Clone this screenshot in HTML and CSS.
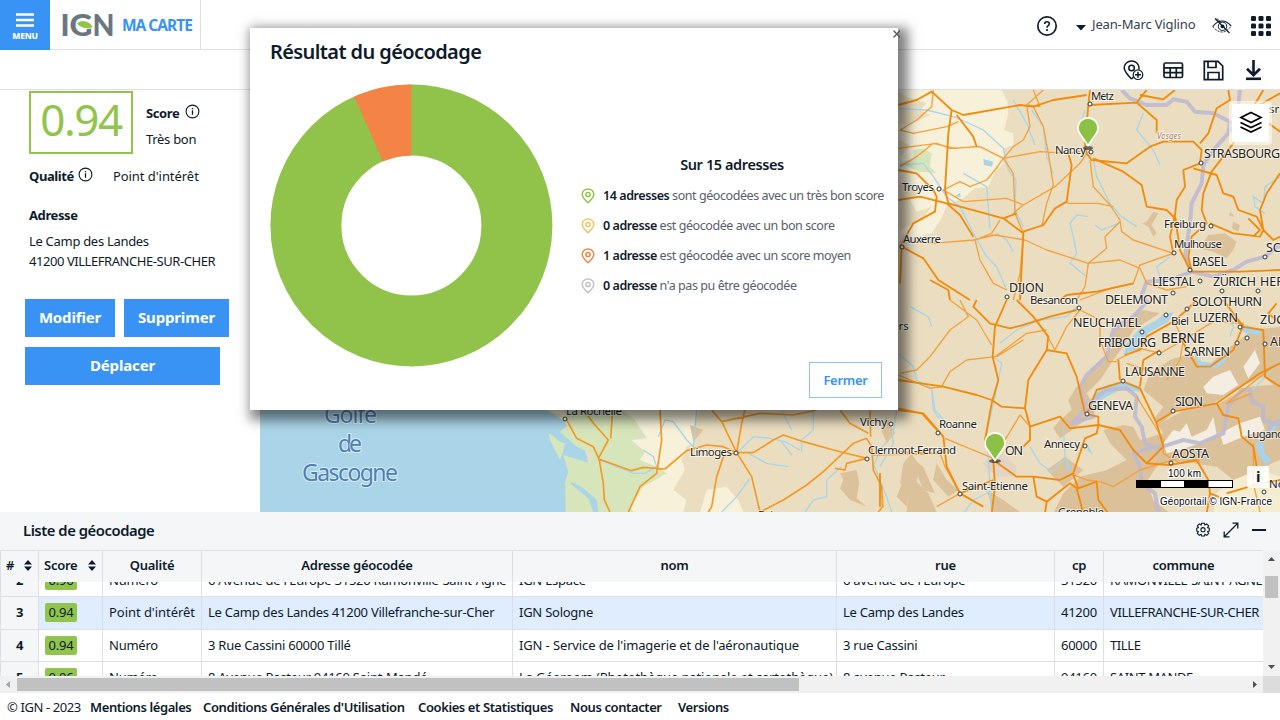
FILE: index.html
```html
<!DOCTYPE html>
<html lang="fr">
<head>
<meta charset="utf-8">
<title>Ma carte - Géocodage</title>
<link rel="stylesheet" href="styles.css">
</head>
<body>
<div class="app">
  <header class="topbar">
    <div class="menu">
      <svg width="18" height="15" viewBox="0 0 18 15"><path d="M0 2.500h18M0 8h18M0 13.500h18" stroke="#fff" stroke-width="2.700"/></svg>
      <span>MENU</span>
    </div>
    <div class="brand">
      <svg class="logo" width="58" height="42" viewBox="59 4 58 42">
        <g class="logo-text"><text x="60.500" y="35.500">I</text><text x="69.500" y="35.500" textLength="23" lengthAdjust="spacingAndGlyphs">G</text><text x="92.500" y="35.500" textLength="22" lengthAdjust="spacingAndGlyphs">N</text></g>
        <path d="M77 23.500Q79.500 20.300 84.500 21.200Q90.500 22.200 92.800 27Q88 29 83.500 27.800Q79 26.800 77 23.500Z" fill="#91c44c" stroke="#fff" stroke-width="1.600" paint-order="stroke"/>
      </svg>
      <span class="brand-name">MA CARTE</span>
    </div>
    <div class="user">
      <svg class="i-help" width="22" height="22" viewBox="0 0 22 22"><circle cx="11" cy="11" r="9.200" fill="none" stroke="#0d1b2a" stroke-width="1.700"/><path d="M8.700 9Q8.700 6.800 11 6.800T13.300 8.800Q13.300 10 11.900 10.900Q11 11.500 11 12.700" fill="none" stroke="#0d1b2a" stroke-width="1.600"/><circle cx="11" cy="15" r="1.100" fill="#0d1b2a"/></svg>
      <svg class="i-caret" width="10" height="6" viewBox="0 0 10 6"><path d="M0 0H10L5 5.500Z" fill="#0d1b2a"/></svg>
      <span class="user-name">Jean-Marc Viglino</span>
      <svg class="i-eye" width="20" height="18" viewBox="0 0 20 18"><g fill="none" stroke="#0d1b2a"><path d="M.8 9.500Q5 4 10 4T19.200 9" stroke-width="1.200"/><path d="M.8 9.500Q5 15 10 15T19.200 9" stroke-width="1" stroke-dasharray="2 1.200"/><circle cx="10.500" cy="9.300" r="4.200" stroke-width="1"/><path d="M3 1.500L17.500 16" stroke-width="1.300"/><path d="M5 1.500L9 5.500" stroke-width="1"/></g><circle cx="10.500" cy="9.300" r="1.900" fill="#0d1b2a"/></svg>
      <svg class="i-grid" width="20" height="20" viewBox="0 0 20 20" fill="#0d1b2a"><rect width="5" height="5" rx="1.300"/><rect x="7.500" width="5" height="5" rx="1.300"/><rect x="15" width="5" height="5" rx="1.300"/><rect y="7.500" width="5" height="5" rx="1.300"/><rect x="7.500" y="7.500" width="5" height="5" rx="1.300"/><rect x="15" y="7.500" width="5" height="5" rx="1.300"/><rect y="15" width="5" height="5" rx="1.300"/><rect x="7.500" y="15" width="5" height="5" rx="1.300"/><rect x="15" y="15" width="5" height="5" rx="1.300"/></svg>
    </div>
  </header>

  <div class="toolbar">
    <svg width="21" height="21" viewBox="0 0 21 21"><g fill="none" stroke="#0d1b2a" stroke-width="1.500"><path d="M8.500 19Q1.200 11.500 1.200 8A7.400 7.100 0 0 1 16 8Q16 8.800 15.700 9.600M8.500 19L10.500 17"/><circle cx="8.600" cy="8" r="2.800"/><circle cx="15" cy="14.700" r="4.800" stroke-width="1.200"/><path d="M12 14.700h6M15 11.700v6"/></g></svg>
    <svg width="21" height="21" viewBox="0 0 21 21"><g fill="none" stroke="#0d1b2a" stroke-width="1.700"><rect x="1" y="3" width="18.500" height="14.500" rx="1.500"/><path d="M1 7.800h18.500M1 12.700h18.500M7.200 8v10M13.300 8v10"/></g></svg>
    <svg width="21" height="21" viewBox="0 0 21 21"><g fill="none" stroke="#0d1b2a" stroke-width="1.700"><path d="M1.300 1.300H15L19.700 6V19.700H1.300Z"/><path d="M5 1.500V7.500H13V1.500M5 19.500V12.500H16V19.500"/></g></svg>
    <svg width="21" height="21" viewBox="0 0 21 21"><g fill="none" stroke="#0d1b2a" stroke-width="2.600"><path d="M10.500 0V15M4 8.800L10.500 15.200L17 8.800"/><path d="M3 18.800H18"/></g></svg>
  </div>

  <main class="content">
    <aside class="side">
      <div class="score-row">
        <div class="score-box">0.94</div>
        <div class="score-info">
          <p class="strong">Score <svg class="info" width="15" height="15" viewBox="0 0 15 15"><circle cx="7.500" cy="7.500" r="6.400" fill="none" stroke="#0d1b2a" stroke-width="1.100"/><path d="M7.500 6.300v4.400M7.500 4v1.300" stroke="#0d1b2a" stroke-width="1.300"/></svg></p>
          <p class="verdict">Très bon</p>
        </div>
      </div>
      <div class="quality"><span class="strong">Qualité <svg class="info info-quality" width="15" height="15" viewBox="0 0 15 15"><circle cx="7.500" cy="7.500" r="6.400" fill="none" stroke="#0d1b2a" stroke-width="1.100"/><path d="M7.500 6.300v4.400M7.500 4v1.300" stroke="#0d1b2a" stroke-width="1.300"/></svg></span><span class="quality-value">Point d'intérêt</span></div>
      <p class="address-title strong">Adresse</p>
      <p class="address"><span>Le Camp des Landes</span><br>41200 VILLEFRANCHE-SUR-CHER</p>
      <div class="actions"><button class="b-edit">Modifier</button><button class="b-del">Supprimer</button><button class="b-move">Déplacer</button></div>
    </aside>

    <section class="map">
      <svg class="map-canvas" width="1020" height="422" viewBox="260 90 1020 422">
        <rect x="260" y="90" width="1020" height="422" fill="#ebdec0"/>
        <!-- Atlantic side -->
        <path d="M260 90H560V400L568 430L585 450L590 470L600 490L604 512H260Z" fill="#aad4e8"/>
        <g transform="translate(540 390) scale(.33333)">
          <path d="M25 60L80 100L100 140L165 170L178 210L190 300L205 366H430L440 330L400 300L440 230L470 190L455 120L480 60Z" fill="#f7f1d9"/>
          <path d="M70 60L90 100L60 125L110 170L155 190L150 220L70 195L85 245L75 280L77 366H280L270 350L310 290L380 250L350 230L300 210L315 185L275 150L320 145L285 90L250 60Z" fill="#d7e5bb"/>
          <path d="M95 275L130 295L170 330L175 366H160L145 325L90 280Z" fill="#aad4e8"/>
          <path d="M25 127L60 155L75 160L68 190L60 210L45 180L30 150ZM15 60L70 78L60 85Z" fill="#d7e5bb"/>
          <path d="M465 60L500 80L480 150L440 170L425 210L455 300L480 366H1200V60Z" fill="#ebdec0"/>
          <path d="M285 366L330 300L390 290L370 320L430 366ZM480 366L500 300L560 290L595 330L610 366Z" fill="#f7f1d9"/>
          <path d="M900 250L950 240L958 280L950 325L980 350L930 330L900 295L910 270ZM1110 200L1150 230L1185 310L1150 300L1125 240ZM1090 270L1110 280L1100 350L1070 320Z" fill="#dcc29b"/>
          <path d="M450 105L490 120L460 155Z" fill="#dcc29b"/>
          <g fill="none" stroke="#a9d5e8" stroke-width="4"><path d="M355 140L375 90L400 95L440 150L460 170L470 60"/><path d="M590 190L640 140L690 145L735 155L780 180M725 155L755 195M625 190L680 220L745 230"/><path d="M860 270L905 230M860 270V320L820 330L795 366M630 265L590 320L545 366M820 60V120L785 150V185M725 60L755 120M1000 220L1040 320L1055 366M1070 60L1060 130L1020 180L1000 230M1175 0L1180 60L1200 90"/><path d="M180 210L230 230L280 250L315 250L350 230L340 200L310 180"/></g>
          <g fill="none" stroke="#f39a25" stroke-width="5" stroke-linejoin="round"><path d="M80 90L110 145L160 170L178 210L190 280L193 330L210 366M178 208L275 242L310 232L375 237L440 182L500 165L550 170L590 188L640 188L700 150L730 135L790 155L880 180L940 195L980 205M265 366L300 290L350 250L365 150L360 60M130 60L165 105L205 150L175 205M218 60L212 145M590 188L545 95L515 60M590 188L605 100L615 60M545 95L660 70L760 75L830 60M590 188L550 200L530 260L515 350L505 366"/><path d="M590 188L635 260L660 366L730 330L800 285L850 245L940 160L980 145L995 170L1000 240L1025 290L1028 350L1015 366M885 235L915 240L920 220L980 205M900 60L930 100L985 130M990 60L992 140M1000 195L1200 190M1075 55L1145 70L1195 125"/></g>
        </g>
        <!-- Northern part -->
        <g transform="translate(880 90) scale(.33333)">
          <path d="M0 0H365L382 35L385 70L372 120L400 130V165L372 175L370 220L345 245L325 290L285 295L250 325L200 345L185 385L155 430L100 445L70 430L50 470H0Z" fill="#f7f1d9"/>
          <path d="M50 0L80 20L140 40L120 60L150 75L90 105L60 100M55 150L90 165L80 180L60 200M55 270L80 285L120 310L90 330L110 365L155 350L125 390L60 420ZM60 520L100 545L130 580L115 590L80 570L55 630" fill="#ebdec0"/>
          <path d="M130 175L155 190L150 230L170 250L120 245L60 220L100 205V180Z" fill="#d7e5bb"/>
          <path d="M310 207L340 215L335 230L312 225ZM223 320L240 308L242 320Z" fill="#a9d3e6"/>
          <path d="M820 365L800 395L785 400L805 410L820 440L830 430L815 405L835 370ZM985 435L1035 430L1070 455L1060 480L1040 505L1000 485L960 475ZM1060 395L1080 405L1075 425L1055 415ZM1050 365L1065 380L1048 378Z" fill="#dcc29b"/>
          <g fill="none" stroke="#a9d5e8" stroke-width="4"><path d="M55 55L140 60L220 80L245 90L310 120L370 175L385 240L408 270L405 360L430 410"/><path d="M400 30L440 100L465 165M455 60L490 110L500 200L520 250M60 225L130 220L160 260L200 320L240 350L280 430L320 500L350 530L380 600M250 250L320 290L330 415M350 430L380 450L400 485M625 380L590 375L570 400L580 440L590 490L570 520L620 560"/><path d="M640 210L650 260L690 340L725 380L770 410M790 70L770 120L820 180L840 225M615 60L600 110L620 150M1150 340L1120 320L1125 350L1155 370M1200 260L1155 290L1150 340M870 500L830 530L850 590M645 405L665 420L715 400"/></g>
          <g fill="none" stroke="#beb9d1" stroke-width="12" stroke-linejoin="round" opacity=".9"><path d="M725 0L750 25L800 45L860 45L880 28L920 35L945 65L1000 70L1050 95L1045 130L1000 180L970 225L965 280L935 340L930 400L915 500L935 545L1000 560L1060 540L1100 515L1155 500L1190 470L1200 470M935 545L870 570L800 575L780 630M1055 125L1070 90L1080 0"/></g>
          <g fill="none" stroke="#f4a03d" stroke-width="4" stroke-linejoin="round"><path d="M160 0L155 50L110 90L60 120L100 130L200 110L235 95M285 170L225 175L160 160L110 200L60 230M55 175L170 160L210 175L300 170L370 205L480 185L570 190L620 180M490 0L440 45L480 50L460 0M460 50L490 110L505 190L520 285L500 340L485 410M440 45L450 110L430 150L400 170L370 205L345 240L320 270L270 290L240 275L190 300"/><path d="M370 205L400 250L405 370L430 430M190 300L250 335L380 325L430 345L525 290L600 220L620 190M400 370L430 345M435 450L345 435L280 450L160 460L100 455M360 390L335 430L285 450L300 510L340 580L380 600M560 340L655 340L700 350M430 440L420 550L400 630M630 210L640 290L690 345L720 390L725 425L760 450L880 490L780 525L760 580L690 595L600 630M720 395L675 440L680 475L625 520L615 590L590 630M435 450L500 480L625 520L720 510L780 535L800 580L860 600L920 590"/></g>
          <g fill="none" stroke="#f18b0c" stroke-width="5.500" stroke-linejoin="round"><path d="M55 45L110 30L155 5L215 60L250 75L420 45L460 50L520 30L620 15M215 60L205 130L195 300L205 340L370 385L430 430L420 630M55 330L120 320L200 340L240 375L280 440M370 385L410 370M430 425L490 405L525 355L560 335L575 225L565 190M230 75L280 140L290 170M630 0L625 45L615 160L620 190L635 210L740 220L810 170L850 155L940 155L965 180L960 220L910 240L915 290L890 330L885 375L870 440L880 490"/><path d="M630 45L770 38L830 90L830 130M770 38L800 0M780 15L850 28L885 0M640 205L730 245L785 285L800 350L860 360L890 390M1045 0L1050 30L1010 55L985 130L960 160M1150 0L1120 50L1060 160L995 245L970 310L965 360L980 400L935 440L925 500L935 545L1080 545L1200 540M940 235L1010 255L1030 310L1060 320L1075 360L1130 380L1150 420L1140 440L1060 430L990 400M1200 250L1160 310L1140 360L1150 420L1180 450L1200 440M1120 440L1140 420L1105 385M885 380L900 480L930 540M65 470L130 505L175 570L270 630M60 470L100 400L165 365L170 320L160 300M55 240L110 250L160 300M65 470L60 580M540 630L560 615L650 605L760 580M150 570L205 600L210 630M1110 60L1180 110L1200 125M1060 90L1200 10"/></g>
        </g>
        <!-- Alps and Rhône valley -->
        <g transform="translate(880 300) scale(.33333)">
          <path d="M790 30L730 60L690 100L700 140L640 200L610 245L590 260L565 300L575 330L540 360L520 385L540 415L590 380L650 330L620 280L660 240L700 180L730 140L760 90L840 40ZM870 180L930 160L980 200L1050 140L1120 90L1200 80V480L1060 540L1010 500L870 480L830 500L800 545L820 600L870 640H520L550 580L600 530L680 510L740 480L690 430L670 390L750 370L780 300L730 320L760 300L820 360L850 320L790 270L810 220Z" fill="#dbc199"/>
          <path d="M720 280L790 310L850 400L780 420L760 380L700 370L690 350L600 380L640 340ZM850 365L930 320L1020 310L1100 260L1180 255L1150 230L1080 260L1000 310L890 330Z" fill="#ebdec0"/>
          <path d="M95 460L70 490L60 550L85 580L80 636H170L145 580L110 545L120 500ZM170 490L200 540L235 570L205 590L160 540ZM320 570L370 600L420 636H340ZM500 510L555 470L610 510L550 560ZM0 380L20 350L45 400L20 430Z" fill="#dcc29b"/>
          <path d="M610 530L670 520L700 580L650 636H540L570 600Z" fill="#dbc199"/>
          <path d="M970 260L1000 230L1050 210L1075 255L1030 285L980 280ZM1090 200L1125 150L1140 190L1105 235ZM850 430L880 390L900 395L920 370L935 410L980 390L1000 350L1010 405L960 430L900 450L860 460ZM1020 400L1080 370L1140 350L1155 390L1090 410L1030 435Z" fill="#f4eee2"/>
          <path d="M1060 540L1140 510L1200 530V640H1000L1010 580Z" fill="#f4edcf"/>
          <path d="M305 490L370 460L410 500L405 530L350 530Z" fill="#e3d4c2"/>
          <g fill="#a9d3e6"><path d="M620 345L640 285L680 255L735 245L780 260L790 275L720 270L680 290L640 315ZM730 165L740 130L775 90L820 65L825 80L790 115L775 145ZM800 80L850 45L880 35L865 65L810 95ZM940 155L965 185L1010 190L1030 165L1040 180L1010 205L960 205ZM1080 85L1100 75L1145 90L1140 105L1095 100ZM555 465L565 480L570 510L560 515ZM1125 430L1150 425L1155 460L1175 480L1155 495L1135 460ZM620 430L640 465L625 455ZM1170 390L1200 350V365L1175 405Z"/></g>
          <g fill="none" stroke="#a9d5e8" stroke-width="4"><path d="M340 170L365 190L345 290L320 400L335 640M360 130L410 90L480 60L560 50L590 20M450 440L480 490L515 515L550 480M90 20L145 50L155 80M55 160L100 200L110 240L155 265L165 330L200 370M1040 40L1060 80L1050 110M550 380L555 470M35 385L40 430L0 500M250 640L280 600L340 570M1110 280L1180 200M960 460L990 480"/></g>
          <g fill="none" stroke="#beb9d1" stroke-width="12" stroke-linejoin="round" opacity=".9"><path d="M805 0L760 50L700 90L680 170L620 225L600 260L615 330L575 370L640 350L625 310L680 270L740 265L770 290L765 350L785 380L795 430L830 445L910 420L960 430L1030 400L1045 320L1085 270L1110 270L1115 305L1150 320V360L1200 375M820 440L760 460L780 500L785 550L825 580L835 636M1200 360L1170 380L1160 410"/></g>
          <g fill="none" stroke="#f4a03d" stroke-width="4" stroke-linejoin="round"><path d="M210 0L290 60L335 135M240 0L265 50L210 90L150 170L110 210L60 220M185 260L210 215L260 180L345 170L440 100L500 90M350 170L430 120M525 150L560 80L600 30L660 60V120L685 185H710M500 105L525 150M450 380L420 345L375 420M50 455L180 460L195 500L240 580L170 620M440 345L450 380M580 525L620 540L660 545L700 560L780 510L880 480M860 240L900 180L910 120L880 60M710 180L780 145L840 160L910 120L1000 65L1090 70M740 190L830 220M770 290L820 370L850 420V460L900 490L960 480M1115 280L1040 310L1180 200M1120 430V550L1140 636M195 415L340 475L380 410M55 225L150 265L190 260"/></g>
          <g fill="none" stroke="#f18b0c" stroke-width="5.500" stroke-linejoin="round"><path d="M380 0L345 80L338 170L355 240L335 310L315 420L340 480L345 560L335 640M290 0L280 20L330 70L390 85L430 75L510 50L590 30M410 0L460 50L505 110L500 150L445 240L435 325L365 320L335 300L290 285L190 260L55 240M435 325L450 380L450 420L430 440M450 380L540 350L570 385L655 375L655 350L620 343L650 270L730 245L780 265L830 370L850 440L800 490L760 450L720 390L655 375L650 400L615 415L580 520L540 540L460 530H410L340 480M500 150L560 160L590 230L615 340M460 530L470 590L500 605L495 640M500 605L570 550L590 565L610 640M580 525L595 565L650 545L655 600L685 640"/><path d="M735 165L780 150L800 110L880 65L920 30L950 0M715 180L720 240M780 260L790 180L840 150M905 120L950 200L990 200L1060 150L1090 75L1050 50M1085 80L1150 90L1155 230L1200 260M1030 0L1090 80M830 365L880 335L1010 310L1140 220L1200 190M1010 310L1030 345L1075 355L1085 410L1120 440L1130 500L1150 540M800 490L870 495L950 480L985 540L990 580L1040 600M990 580L980 640M1040 580L1140 550L1200 540M55 330L130 340L190 410L200 500L240 580L340 540M240 580L310 620M0 520V620M1190 10L1165 40L1200 70"/></g>
        </g>
        <g class="towns" fill="#fff" stroke="#333" stroke-width="1"><circle cx="1090" cy="104" r="2"/><circle cx="1091" cy="152" r="2"/><circle cx="939" cy="189" r="2"/><circle cx="902" cy="247" r="2"/><circle cx="1201" cy="163" r="2"/><circle cx="1211" cy="226" r="2"/><circle cx="1174" cy="253" r="2"/><circle cx="1190" cy="270" r="2"/><circle cx="1200" cy="281" r="2"/><circle cx="1222" cy="291" r="2"/><circle cx="1173" cy="293" r="2"/><circle cx="1007" cy="297" r="2"/><circle cx="1079" cy="308" r="2"/><circle cx="1166" cy="315" r="2"/><circle cx="1142" cy="332" r="2"/><circle cx="1187" cy="309" r="2"/><circle cx="1159" cy="353" r="2"/><circle cx="1123" cy="381" r="2"/><circle cx="1087" cy="414" r="2"/><circle cx="1173" cy="411" r="2"/><circle cx="1085" cy="446" r="2"/><circle cx="1171" cy="463" r="2"/><circle cx="960" cy="494" r="2"/><circle cx="938" cy="433" r="2"/><circle cx="891" cy="424" r="2"/><circle cx="867" cy="459" r="2"/><circle cx="736" cy="453" r="2"/><circle cx="565" cy="419" r="2"/><circle cx="1265" cy="257" r="2"/><circle cx="1258" cy="291" r="2"/><circle cx="1240" cy="327" r="2"/><circle cx="1247" cy="338" r="2"/><circle cx="1237" cy="343" r="2"/><circle cx="1265" cy="344" r="2"/><circle cx="1264" cy="492" r="2"/></g>
        <g class="places">
          <text x="1091" y="100" textLength="23">Metz</text><text x="1055" y="154" textLength="31">Nancy</text><text x="902" y="191" textLength="32">Troyes</text><text x="903" y="243" textLength="38">Auxerre</text><text x="1164" y="228" textLength="42">Freiburg</text><text x="1174" y="248" textLength="48">Mulhouse</text><text x="1030" y="304" textLength="48">Besancon</text><text x="1171" y="325" textLength="18">Biel</text><text x="939" y="428" textLength="38">Roanne</text><text x="868" y="454" textLength="88">Clermont-Ferrand</text><text x="1044" y="448" textLength="36">Annecy</text><text x="962" y="490" textLength="66">Saint-Etienne</text><text x="1247" y="438" textLength="37">Lugano</text><text x="1058" y="516" textLength="46">Grenoble</text><text x="860" y="426" textLength="27">Vichy</text><text x="690" y="456" textLength="42">Limoges</text><text x="566" y="415" textLength="56">La Rochelle</text><text x="892" y="330">ers</text><text x="758" y="519">Brive</text><text x="1269" y="488">Nov</text><text x="1269" y="113">sruhe</text>
        </g>
        <g class="cities">
          <text x="1204" y="158" textLength="76">STRASBOURG</text><text x="1192" y="266" textLength="35">BASEL</text><text x="1152" y="286" textLength="43">LIESTAL</text><text x="1213" y="286" textLength="43">ZÜRICH</text><text x="1260" y="286">HERISAU</text><text x="1266" y="252">SCH</text><text x="1009" y="292" textLength="35">DIJON</text><text x="1105" y="304" textLength="63">DELEMONT</text><text x="1192" y="306" textLength="70">SOLOTHURN</text><text x="1073" y="327" textLength="68">NEUCHATEL</text><text x="1193" y="322" textLength="45">LUZERN</text><text x="1260" y="324">ZUG</text><text x="1098" y="347" textLength="58">FRIBOURG</text><text class="capital" x="1161" y="343" textLength="44">BERNE</text><text x="1184" y="356" textLength="46">SARNEN</text><text x="1270" y="346">AL</text><text x="1125" y="376" textLength="60">LAUSANNE</text><text x="1088" y="410" textLength="45">GENEVA</text><text x="1175" y="406" textLength="28">SION</text><text x="1172" y="458" textLength="37">AOSTA</text><text x="1005" y="455" textLength="18">ON</text>
        </g>
        <text class="relief" x="1157" y="139" textLength="24">Vosges</text>
        <g class="sea"><text x="324" y="423" textLength="53">Golfe</text><text x="338" y="452" textLength="24">de</text><text x="302" y="481" textLength="96">Gascogne</text></g>
        <ellipse cx="1088" cy="148" rx="5" ry="2" fill="#333" opacity=".7"/><ellipse cx="995" cy="461" rx="6" ry="2" fill="#333" opacity=".7"/>
        <g fill="#8dc145" stroke="#fff" stroke-width="1.600"><path d="M1088 145.500L1080.500 134.500A10 10 0 1 1 1095.500 134.500Z"/><path d="M995 460.500L987.500 449.500A10 10 0 1 1 1002.500 449.500Z"/></g>
        <rect x="1136" y="480" width="97" height="8" fill="#000"/><path d="M1161 481h23v6h-23zM1208.500 481h23.500v6h-23.500z" fill="#fff"/>
        <text class="scale" x="1168" y="477" textLength="33">100 km</text>
        <text class="scale" x="1160" y="505" textLength="112">Géoportail © IGN-France</text>
      </svg>
      <div class="layers"><svg width="24" height="23" viewBox="0 0 24 23"><path d="M12 1.500L22 6.500L12 11.500L2 6.500ZM1.500 11.500L12 16.500L22.500 11.500M1.500 16L12 21L22.500 16" fill="none" stroke="#000" stroke-width="1.700"/></svg></div>
      <div class="map-info">i</div>
    </section>
  </main>

  <section class="list">
    <div class="list-head"><h2>Liste de géocodage</h2>
      <div class="list-tools">
        <svg width="16" height="16" viewBox="0 0 16 16"><g fill="none" stroke="#0d1b2a" stroke-width="1" transform="translate(-.800 0) scale(1.100)"><path d="M6.700 1.200h2.600l.4 1.500 1.700-.9 1.700 1.700-.9 1.700 1.500.4v2.700l-1.500.4.9 1.700-1.700 1.700-1.700-.9-.4 1.500H6.700l-.4-1.500-1.700.9-1.700-1.700.9-1.700-1.500-.4V5.600l1.500-.4-.9-1.700 1.700-1.700 1.700.9Z"/><circle cx="8" cy="7" r="1.900"/></g></svg>
        <svg width="16" height="16" viewBox="0 0 16 16"><path d="M1.500 14.500L14.500 1.500M9.500 1.200H14.800V6.500M1.200 9.500V14.800H6.500" fill="none" stroke="#0d1b2a" stroke-width="1.300"/></svg>
        <svg width="16" height="16" viewBox="0 0 16 16"><path d="M1 8H15" stroke="#0d1b2a" stroke-width="2"/></svg>
      </div>
    </div>
    <div class="table-zone">
      <div class="table">
        <div class="row head"><div class="sort"># <svg width="8" height="11" viewBox="0 0 8 11"><path d="M0 4.500L4 0L8 4.500ZM0 6.500H8L4 11Z" fill="#0d1b2a"/></svg></div><div class="sort">Score <svg width="8" height="11" viewBox="0 0 8 11"><path d="M0 4.500L4 0L8 4.500ZM0 6.500H8L4 11Z" fill="#0d1b2a"/></svg></div><div>Qualité</div><div>Adresse géocodée</div><div>nom</div><div>rue</div><div>cp</div><div>commune</div></div>
        <div class="rows">
          <div class="row"><div class="num">2</div><div><b>0.96</b></div><div>Numéro</div><div>6 Avenue de l'Europe 31520 Ramonville-Saint-Agne</div><div>IGN Espace</div><div>6 avenue de l'Europe</div><div>31520</div><div class="caps">RAMONVILLE-SAINT-AGNE</div></div>
          <div class="row selected"><div class="num">3</div><div><b>0.94</b></div><div class="quality-cell">Point d'intérêt</div><div>Le Camp des Landes 41200 Villefranche-sur-Cher</div><div>IGN Sologne</div><div>Le Camp des Landes</div><div>41200</div><div class="caps">VILLEFRANCHE-SUR-CHER</div></div>
          <div class="row"><div class="num">4</div><div><b>0.94</b></div><div>Numéro</div><div>3 Rue Cassini 60000 Tillé</div><div class="name-cell">IGN - Service de l'imagerie et de l'aéronautique</div><div>3 rue Cassini</div><div>60000</div><div class="caps">TILLE</div></div>
          <div class="row"><div class="num">5</div><div><b>0.96</b></div><div>Numéro</div><div>8 Avenue Pasteur 94160 Saint-Mandé</div><div class="name-cell">La Géoroom (Photothèque nationale et cartothèque)</div><div>8 avenue Pasteur</div><div>94160</div><div class="caps">SAINT-MANDE</div></div>
        </div>
      </div>
      <div class="vbar"><svg width="17" height="126" viewBox="0 0 17 126"><path d="M5 11L8.500 7L12 11ZM5 115H12L8.500 119Z" fill="#505050"/><rect x="2" y="26" width="13" height="22" fill="#c1c1c1"/></svg></div>
    </div>
    <div class="hbar"><svg width="1263" height="17" viewBox="0 0 1263 17"><path d="M10 5L6 8.500L10 12Z" fill="#a3a3a3"/><path d="M1253 5L1257 8.500L1253 12Z" fill="#505050"/><rect x="17" y="2" width="782" height="13" fill="#c1c1c1"/></svg></div>
  </section>

  <footer class="foot"><span>© IGN - 2023</span><a>Mentions légales</a><a>Conditions Générales d'Utilisation</a><a>Cookies et Statistiques</a><a>Nous contacter</a><a>Versions</a></footer>
</div>

<div class="dialog">
  <svg class="close" width="7" height="8" viewBox="0 0 7 8"><path d="M.5 .5L7 7.500M7 .5L.5 7.500" stroke="#555" stroke-width="1.200"/></svg>
  <h1>Résultat du géocodage</h1>
  <div class="result">
    <svg class="donut" width="284" height="284" viewBox="-142.400 -142.400 284 284"><circle r="105.500" fill="none" stroke="#91c34b" stroke-width="71"/><path d="M0 -141V-70A70 70 0 0 0 -28.500 -63.900L-57.300 -128.800A141 141 0 0 1 0 -141Z" fill="#f38446"/></svg>
    <div class="legend">
      <h3>Sur 15 adresses</h3>
      <p class="very-good"><svg width="14" height="16" viewBox="0 0 14 16"><path d="M7 14.800Q1.200 9.500 1.200 6.500A5.800 5.600 0 0 1 12.800 6.500Q12.800 9.500 7 14.800Z"/><circle cx="7" cy="6.500" r="2.100"/></svg><span><b>14 adresses</b> sont géocodées avec un très bon score</span></p>
      <p class="good"><svg width="14" height="16" viewBox="0 0 14 16"><path d="M7 14.800Q1.200 9.500 1.200 6.500A5.800 5.600 0 0 1 12.800 6.500Q12.800 9.500 7 14.800Z"/><circle cx="7" cy="6.500" r="2.100"/></svg><span><b>0 adresse</b> est géocodée avec un bon score</span></p>
      <p class="medium"><svg width="14" height="16" viewBox="0 0 14 16"><path d="M7 14.800Q1.200 9.500 1.200 6.500A5.800 5.600 0 0 1 12.800 6.500Q12.800 9.500 7 14.800Z"/><circle cx="7" cy="6.500" r="2.100"/></svg><span><b>1 adresse</b> est géocodée avec un score moyen</span></p>
      <p class="none"><svg width="14" height="16" viewBox="0 0 14 16"><path d="M7 14.800Q1.200 9.500 1.200 6.500A5.800 5.600 0 0 1 12.800 6.500Q12.800 9.500 7 14.800Z"/><circle cx="7" cy="6.500" r="2.100"/></svg><span><b>0 adresse</b> n'a pas pu être géocodée</span></p>
      <button class="b-close">Fermer</button>
    </div>
  </div>
</div>
</body>
</html>
```

FILE: styles.css
```css
* { box-sizing: border-box; }
body { margin: 0; width: 1280px; height: 720px; overflow: hidden; background: #fff; color: #0d1b2a; font: 13px/20px "Noto Sans", "Open Sans", sans-serif; letter-spacing: -.25px; }
p, h1, h2, h3 { margin: 0; }
svg { display: block; flex: none; }
button { font-family: inherit; border: 0; padding: 0; white-space: nowrap; }
.app { display: flex; flex-direction: column; width: 1280px; height: 720px; }

.topbar { display: flex; height: 50px; border-bottom: 1px solid #dfe0e3; }
.menu { width: 50px; height: 50px; background: #3993f5; color: #fff; display: flex; flex-direction: column; align-items: center; padding-top: 12px; font-size: 8.5px; font-weight: 800; line-height: 18px; letter-spacing: -.2px; }
.brand { width: 151px; display: flex; align-items: center; padding-left: 9px; border-right: 1px solid #dfe0e3; }
.logo-text { font: 900 30px Lato, sans-serif; fill: #6b7780; letter-spacing: 0; }
.brand-name { color: #3993f5; font-size: 15.5px; font-weight: 700; margin-left: 5px; letter-spacing: -1px; white-space: nowrap; }
.user { margin-left: auto; display: flex; align-items: center; padding-right: 9px; padding-top: 3px; }
.i-caret { margin: 3px 6px 0 18px; }
.user-name { width: 104px; white-space: nowrap; color: #34404c; margin-top: -4px; letter-spacing: -.15px; }
.i-eye { margin: 0 19px 0 16px; }

.toolbar { height: 40px; border-bottom: 1px solid #dfe0e3; display: flex; justify-content: flex-end; align-items: center; gap: 19px; padding: 1px 16px 0 0; }

.content { display: flex; height: 422px; }
.side { width: 260px; padding: 1px 0 0 25px; }
.score-row { display: flex; padding-left: 4px; }
.score-box { width: 104px; height: 63px; border: 2px solid #91c44c; color: #91c44c; font-size: 44px; line-height: 52px; text-align: center; font-weight: 400; letter-spacing: -1.500px; }
.score-info { padding: 9px 0 0 13px; line-height: 26px; }
.strong { font-weight: 700; letter-spacing: -.4px; }
.info { display: inline-block; margin: 0 0 0 3px; vertical-align: -1px; }
.info-quality { margin: 0 0 0 1px; }
.verdict { letter-spacing: -.3px; }
.quality { display: flex; padding: 12px 0 0 4px; }
.quality-value { margin-left: 20px; letter-spacing: -.05px; }
.address-title { padding: 19px 0 0 4px; }
.address { padding: 6px 0 0 4px; white-space: nowrap; letter-spacing: -.44px; }
.address span { letter-spacing: -.3px; }
.actions { display: flex; flex-wrap: wrap; gap: 10px 9px; padding-top: 28px; }
.actions button { height: 38px; background: #3993f5; color: #fff; font-size: 15px; font-weight: 700; letter-spacing: -.15px; padding-bottom: 2px; }
.b-edit { width: 90px; } .b-del { width: 105px; } .b-move { width: 195px; }

.map { position: relative; width: 1020px; height: 422px; overflow: hidden; }
.map text { paint-order: stroke; stroke: #fff9; stroke-width: 2px; letter-spacing: 0; fill: #222; }
.places { font-size: 11.5px; }
.cities { font-size: 12.5px; }
.capital { font-size: 14.5px; }
.map .relief { font-size: 8px; font-style: italic; fill: #a67c67; }
.map .sea text { font-size: 23px; fill: #4a80b5; }
.map .scale { font: 10px "Liberation Sans", Arial, sans-serif; fill: #000; stroke: #fff; }
.layers { position: absolute; right: 8px; top: 11px; width: 43px; height: 44px; border: 3px solid #fff8; border-radius: 4px; background: #fff; background-clip: padding-box; display: grid; place-items: center; padding-bottom: 2px; }
.map-info { position: absolute; right: 11px; top: 376px; width: 22px; height: 22px; background: #fffd; border-radius: 2px; text-align: center; line-height: 21px; font-size: 15px; font-weight: 700; }

.list { background: #f5f6f8; height: 181px; }
.list-head { display: flex; justify-content: space-between; height: 38px; padding: 0 13px 0 23px; align-items: center; }
.list h2 { font-size: 14.8px; font-weight: 600; letter-spacing: -.45px; padding-bottom: 3px; }
.list-tools { display: flex; gap: 12px; padding-bottom: 2px; }
.table-zone { display: flex; height: 126px; }
.table { width: 1263px; height: 126px; overflow: hidden; border-top: 1px solid #dcdfe3; }
.row { display: grid; grid-template-columns: 38px 64px 99px 311px 324px 218px 49px 160px; height: 32px; }
.row > div { border-left: 1px solid #dcdfe3; padding-left: 6px; line-height: 30px; white-space: nowrap; overflow: hidden; }
.head > div { font-weight: 600; text-align: center; padding: 0; height: 31px; line-height: 29px; }
.head .sort { display: flex; align-items: center; justify-content: space-between; padding: 0 6px 2px 5px; }
.row .caps { letter-spacing: -.4px; }
.row .quality-cell { letter-spacing: -.05px; }
.row .name-cell { letter-spacing: -.13px; }
.rows { height: 94px; margin-top: -1px; overflow: hidden; background: #fff; }
.rows .row { border-bottom: 1px solid #dcdfe3; }
.rows .row:first-child { margin-top: -17px; }
.rows .row:nth-child(2) { height: 33px; }
.rows .row:nth-child(2) > div { line-height: 31px; }
.rows .num { background: #f5f6f8; font-weight: 700; text-align: center; padding: 0; }
.rows .row b { display: block; width: 32px; height: 19px; margin-top: 6px; border-radius: 2px; background: #91c44c; font-weight: 400; text-align: center; line-height: 19px; }
.selected > div:not(.num) { background: #e0edfe; }
.vbar { width: 17px; background: #f1f1f1; }
.hbar { height: 17px; background: linear-gradient(90deg, #f1f1f1 1263px, #dcdcdc 1263px); }
.foot { height: 27px; display: grid; grid-template-columns: 83px 113px 215px 152px 108px 80px; padding-left: 7px; line-height: 28px; white-space: nowrap; letter-spacing: -.4px; }
.foot a { font-weight: 600; }

.dialog { position: absolute; left: 250px; top: 28px; width: 648px; height: 382px; background: #fff; padding: 11px 0 0 20px; box-shadow: 5px 5px 11px 5px rgba(0, 0, 0, .5); }
.dialog h1 { font-size: 20px; line-height: 25px; font-weight: 600; letter-spacing: -.6px; }
.close { position: absolute; right: -2px; top: 2px; }
.result { display: flex; padding-top: 19px; }
.donut { margin-left: -1px; }
.legend { width: 302px; margin-left: 28px; display: flex; flex-direction: column; }
.legend h3 { font-size: 14.5px; font-weight: 600; letter-spacing: -.4px; text-align: center; margin: 71px 0 7px; }
.legend p { display: flex; align-items: center; gap: 8px; height: 30px; color: #55606b; white-space: nowrap; font-size: 12.5px; letter-spacing: -.43px; }
.legend p svg { fill: none; stroke: currentColor; stroke-width: 1.5; }
.legend b { color: #0d1b2a; font-weight: 600; }
.very-good svg { color: #91c44c; }
.good svg { color: #f5c263; }
.medium svg { color: #ec8747; }
.none svg { color: #bfc3c8; }
.b-close { width: 73px; height: 36px; border: 1px solid #8dc0f8; background: #fff; color: #3993f5; font-weight: 600; font-size: 13px; letter-spacing: -.3px; }
.legend .b-close { margin: 61px 1px 0 auto; }
```
